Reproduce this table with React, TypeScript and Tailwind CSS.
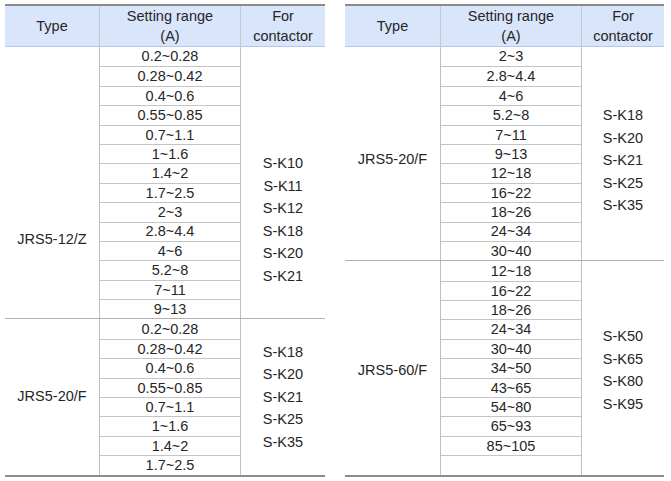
import React from 'react';

type Group = {
  type: string;
  ranges: string[];
  contactors: string[];
  typePad: string;
  conPad: string;
};

const leftGroups: Group[] = [
  {
    type: 'JRS5-12/Z',
    ranges: ['0.2~0.28', '0.28~0.42', '0.4~0.6', '0.55~0.85', '0.7~1.1', '1~1.6', '1.4~2', '1.7~2.5', '2~3', '2.8~4.4', '4~6', '5.2~8', '7~11', '9~13'],
    contactors: ['S-K10', 'S-K11', 'S-K12', 'S-K18', 'S-K20', 'S-K21'],
    typePad: 'pt-[114px]',
    conPad: 'pt-[74px]',
  },
  {
    type: 'JRS5-20/F',
    ranges: ['0.2~0.28', '0.28~0.42', '0.4~0.6', '0.55~0.85', '0.7~1.1', '1~1.6', '1.4~2', '1.7~2.5'],
    contactors: ['S-K18', 'S-K20', 'S-K21', 'S-K25', 'S-K35'],
    typePad: 'pt-0',
    conPad: 'pt-0',
  },
];

const rightGroups: Group[] = [
  {
    type: 'JRS5-20/F',
    ranges: ['2~3', '2.8~4.4', '4~6', '5.2~8', '7~11', '9~13', '12~18', '16~22', '18~26', '24~34', '30~40'],
    contactors: ['S-K18', 'S-K20', 'S-K21', 'S-K25', 'S-K35'],
    typePad: 'pt-[12px]',
    conPad: 'pt-[14px]',
  },
  {
    type: 'JRS5-60/F',
    ranges: ['12~18', '16~22', '18~26', '24~34', '30~40', '34~50', '43~65', '54~80', '65~93', '85~105', ''],
    contactors: ['S-K50', 'S-K65', 'S-K80', 'S-K95'],
    typePad: 'pt-[5px]',
    conPad: 'pt-[5px]',
  },
];

function Table({ groups, cols, width }: { groups: Group[]; cols: string; width: string }) {
  return (
    <div className={`${width} flex flex-col`}>
      {/* Header */}
      <div className={`grid ${cols} h-[43px] border-t-2 border-b border-t-[#8a8a8a] border-b-[#b4c8e8] bg-[#d8e5fb] leading-[20px]`}>
        <div className="flex items-center justify-center">Type</div>
        <div className="flex flex-col items-center justify-center border-x border-[#c4c8d0]">
          <span>Setting range</span>
          <span>(A)</span>
        </div>
        <div className="flex flex-col items-center justify-center">
          <span>For</span>
          <span>contactor</span>
        </div>
      </div>

      {groups.map((g, gi) => (
        <div
          key={gi}
          className={`grid ${cols} ${gi === groups.length - 1 ? 'border-b-2 border-[#8c8c8c]' : 'border-b border-[#b0b0b0]'}`}
        >
          <div className={`flex items-center justify-center ${g.typePad}`}>{g.type}</div>
          <div className="flex flex-col border-x border-[#c0c0c0]">
            {g.ranges.map((r, ri) => (
              <div
                key={ri}
                className={`h-[19.4px] flex items-center justify-center leading-none ${ri > 0 ? 'border-t border-[#c4c4c4]' : ''}`}
              >
                {r}
              </div>
            ))}
          </div>
          <div className={`flex flex-col items-center justify-center leading-[22.5px] ${g.conPad}`}>
            {g.contactors.map((c) => (
              <span key={c}>{c}</span>
            ))}
          </div>
        </div>
      ))}
    </div>
  );
}

export default function App() {
  return (
    <div className="w-[671px] h-[481px] bg-white text-[#262626] text-[14.5px] font-['Liberation_Sans',Arial,sans-serif] flex gap-[20px] pl-[5px] pt-[4px]">
      <Table groups={leftGroups} cols="grid-cols-[94px_142px_84px]" width="w-[320px]" />
      <Table groups={rightGroups} cols="grid-cols-[95px_142px_82px]" width="w-[319px]" />
    </div>
  );
}
